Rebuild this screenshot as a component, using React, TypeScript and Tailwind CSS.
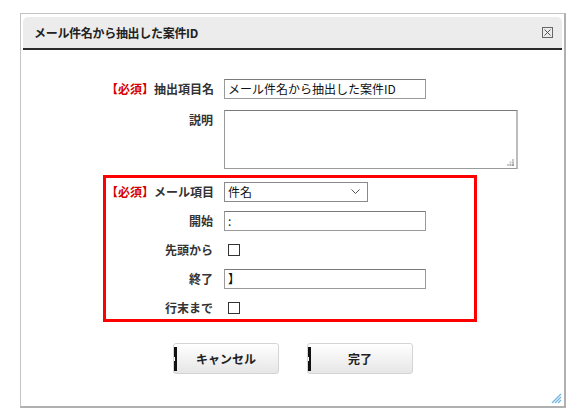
export default function App() {
  const font = "font-['Noto_Sans_CJK_JP','Noto_Sans',sans-serif]";

  const Label = ({ req, text, top }: { req?: boolean; text: string; top?: boolean }) => (
    <div
      className={`w-[107px] shrink-0 text-right text-[12px] font-bold text-[#333] whitespace-nowrap leading-[20px] ${top ? "self-start" : ""}`}
    >
      {req && <span className="text-[#d40000]">【必須】</span>}
      {text}
    </div>
  );

  const TextBox = ({ value, w }: { value: string; w: string }) => (
    <div
      className={`${w} shrink-0 h-[20px] border border-[#9a9a9a] border-t-[#7a7a7a] bg-white pl-[3px] text-[12px] leading-[18px] text-[#111] whitespace-nowrap overflow-hidden`}
    >
      {value}
    </div>
  );

  const Check = () => <div className="ml-[4px] w-[12px] h-[12px] border border-[#333] bg-white" />;

  const Button = ({ text }: { text: string }) => (
    <button className="relative w-[106px] h-[31px] rounded-[3px] border border-[#d4d4d4] bg-gradient-to-b from-white to-[#e6e6e6] text-[12px] font-bold text-[#222]">
      <span className="absolute left-0 top-[3px] w-[3px] h-[24px] bg-[#111]" />
      <span className="absolute left-0 top-[13px] w-[1px] h-[4px] bg-white" />
      {text}
    </button>
  );

  return (
    <div className={`w-[570px] h-[413px] bg-white ${font}`}>
      <div className="pt-[13px] pl-[20px]">
        <div className="relative w-[546px] h-[395px] border border-[#c4c4c4] border-r-2 border-b-2 border-r-[#b0b0b0] border-b-[#b0b0b0] bg-white px-[1px] pt-[3px]">
          {/* header */}
          <div className="mx-[1px] h-[33px] rounded-t-[5px] bg-[#ececec] border-b-2 border-[#2a2a2a] flex items-center justify-between pl-[11px] pr-[9px]">
            <span className="text-[12px] font-bold text-[#222] tracking-[-0.3px]">メール件名から抽出した案件ID</span>
            <span className="w-[11px] h-[11px] border border-[#666] flex items-center justify-center">
              <svg width="9" height="9" viewBox="0 0 9 9">
                <path d="M1.5 1.5 L7.5 7.5 M7.5 1.5 L1.5 7.5" stroke="#555" strokeWidth="1" />
              </svg>
            </span>
          </div>

          {/* form */}
          <div className="ml-[81px] mt-[29px]">
            <div className="px-[3px] flex flex-col gap-[11px]">
              <div className="flex items-center gap-[11px]">
                <Label req text="抽出項目名" />
                <TextBox value="メール件名から抽出した案件ID" w="w-[202px]" />
              </div>
              <div className="flex gap-[11px]">
                <Label text="説明" top />
                <div className="relative shrink-0 w-[294px] h-[59px] border border-[#9a9a9a] border-t-[#7a7a7a] border-r-2 border-r-[#bdbdbd] bg-white">
                  <svg className="absolute right-[2px] bottom-[2px]" width="7" height="7" viewBox="0 0 7 7">
                    <rect x="5" y="0" width="2" height="2" fill="#c8c8c8" />
                    <rect x="2.5" y="2.5" width="2" height="2" fill="#c8c8c8" />
                    <rect x="5" y="2.5" width="2" height="2" fill="#b0b0b0" />
                    <rect x="0" y="5" width="2" height="2" fill="#c8c8c8" />
                    <rect x="2.5" y="5" width="2" height="2" fill="#b0b0b0" />
                    <rect x="5" y="5" width="2" height="2" fill="#a0a0a0" />
                  </svg>
                </div>
              </div>
            </div>

            <div className="mt-[6px] w-[374px] border-[3px] border-[#ff0000] pt-[4px] pb-[1px] flex flex-col gap-[9px]">
              <div className="flex items-center gap-[11px]">
                <Label req text="メール項目" />
                <div className="w-[144px] h-[20px] border border-[#8a8a8a] bg-white pl-[3px] pr-[7px] flex items-center justify-between text-[12px] text-[#111]">
                  <span>件名</span>
                  <svg width="9" height="6" viewBox="0 0 9 6">
                    <path d="M0.5 0.5 L4.5 4.5 L8.5 0.5" stroke="#555" strokeWidth="1" fill="none" />
                  </svg>
                </div>
              </div>
              <div className="flex items-center gap-[11px]">
                <Label text="開始" />
                <TextBox value=":" w="w-[202px]" />
              </div>
              <div className="flex items-center gap-[11px] h-[20px]">
                <Label text="先頭から" />
                <Check />
              </div>
              <div className="flex items-center gap-[11px]">
                <Label text="終了" />
                <TextBox value="】" w="w-[202px]" />
              </div>
              <div className="flex items-center gap-[11px] h-[20px]">
                <Label text="行末まで" />
                <Check />
              </div>
            </div>
          </div>

          {/* buttons */}
          <div className="mt-[21px] flex justify-center gap-[28px] pl-[1px]">
            <Button text="キャンセル" />
            <Button text="完了" />
          </div>

          <svg className="absolute right-[2px] bottom-[2px]" width="11" height="11" viewBox="0 0 11 11">
            <path d="M1 10 L10 1 M4 10 L10 4 M7 10 L10 7" stroke="#6fb3e0" strokeWidth="1.2" />
          </svg>
        </div>
      </div>
    </div>
  );
}
